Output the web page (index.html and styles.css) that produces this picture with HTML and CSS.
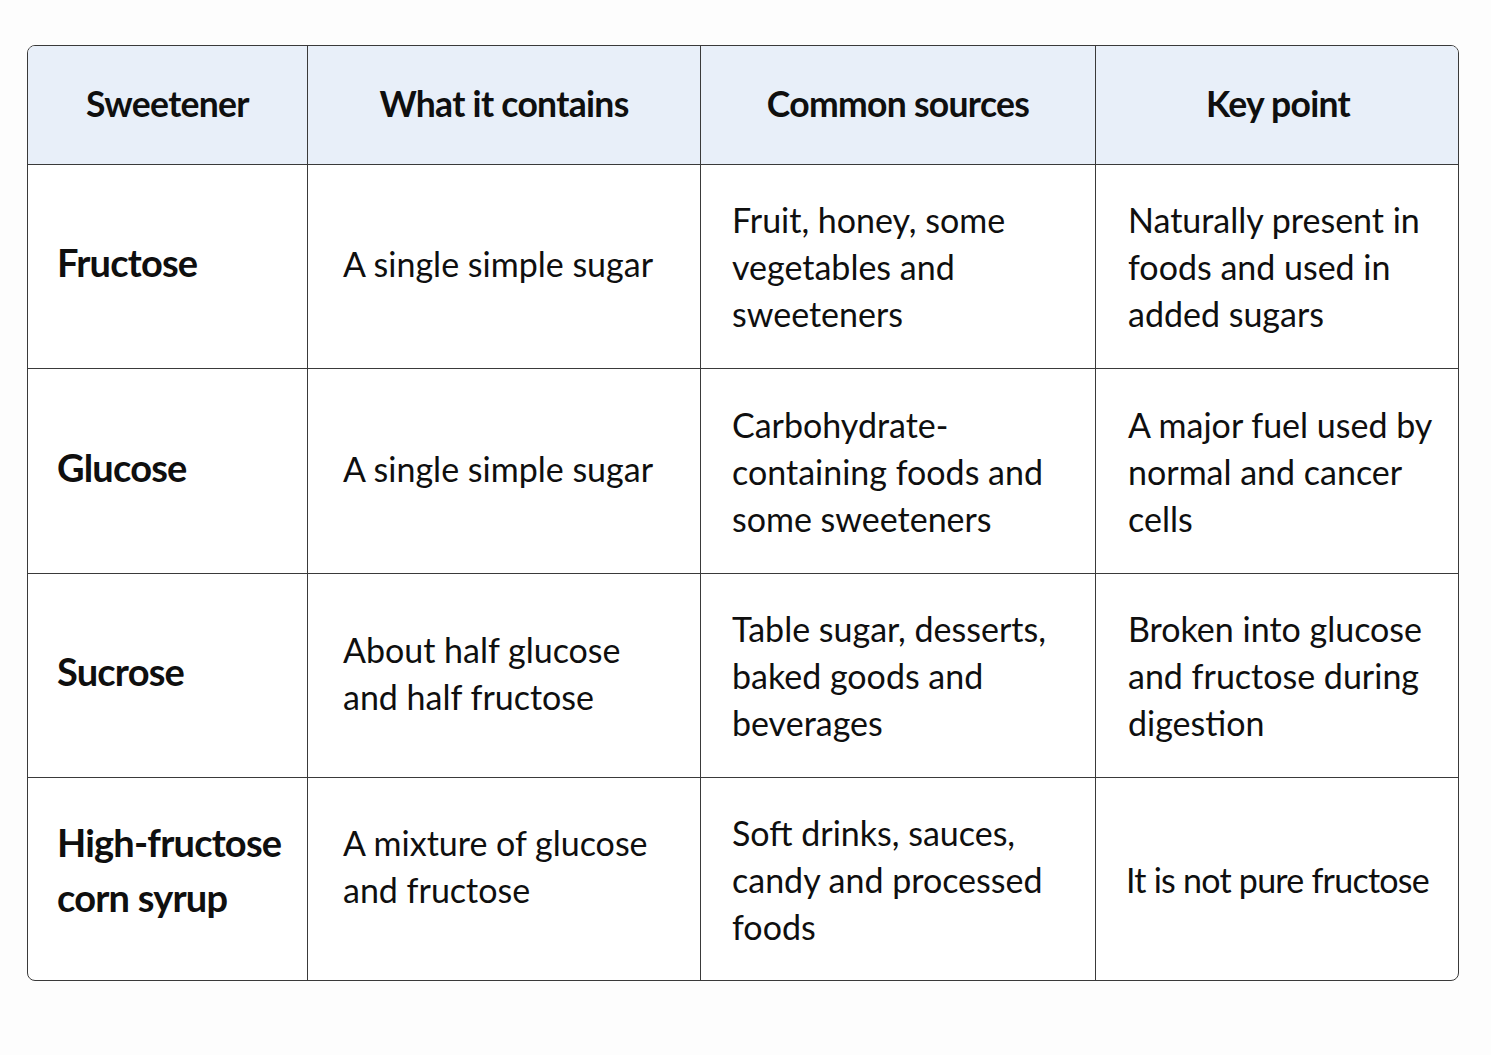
FILE: index.html
```html
<!DOCTYPE html>
<html lang="en">
<head>
<meta charset="utf-8">
<title>Sweeteners</title>
<link rel="stylesheet" href="styles.css">
</head>
<body>
<div class="table">
  <div class="cell head">Sweetener</div>
  <div class="cell head">What it contains</div>
  <div class="cell head">Common sources</div>
  <div class="cell head last">Key point</div>

  <div class="cell name">Fructose</div>
  <div class="cell c2">A single simple sugar</div>
  <div class="cell c3">Fruit, honey, some vegetables and sweeteners</div>
  <div class="cell c4 last">Naturally present in foods and used in added sugars</div>

  <div class="cell name">Glucose</div>
  <div class="cell c2">A single simple sugar</div>
  <div class="cell c3">Carbohydrate-containing foods and some sweeteners</div>
  <div class="cell c4 last">A major fuel used by normal and cancer cells</div>

  <div class="cell name">Sucrose</div>
  <div class="cell c2">About half glucose and half fructose</div>
  <div class="cell c3">Table sugar, desserts, baked goods and beverages</div>
  <div class="cell c4 last">Broken into glucose and fructose during digestion</div>

  <div class="cell name bottom">High-fructose corn syrup</div>
  <div class="cell c2 bottom">A mixture of glucose and fructose</div>
  <div class="cell c3 bottom">Soft drinks, sauces, candy and processed foods</div>
  <div class="cell c4 last bottom tight">It is not pure fructose</div>
</div>
</body>
</html>
```

FILE: styles.css
```css
html, body {
  margin: 0;
  padding: 0;
  background: #fdfdfd;
}

body {
  font-family: Lato, "Open Sans", "Liberation Sans", sans-serif;
  color: #0f0f0f;
}

.table {
  margin: 45px 0 0 27px;
  width: 1432px;
  display: grid;
  grid-template-columns: 280px 393px 395px 364px;
  grid-template-rows: 119px 204px 205px 204px 202px;
  border: 1.5px solid #3a3a3a;
  border-radius: 8px;
  overflow: hidden;
  box-sizing: border-box;
  background: #fff;
}

.cell {
  display: flex;
  align-items: center;
  border-right: 1.5px solid #3a3a3a;
  border-bottom: 1.5px solid #3a3a3a;
  font-size: 34px;
  line-height: 47px;
  box-sizing: border-box;
}

.cell.last { border-right: none; }
.cell.bottom { border-bottom: none; }

.head {
  background: #e8eff9;
  justify-content: center;
  font-weight: 700;
  font-size: 35.5px;
  letter-spacing: -0.7px;
  padding-bottom: 4px;
}

.name {
  font-weight: 700;
  font-size: 38px;
  line-height: 55px;
  letter-spacing: -0.8px;
  padding-left: 29px;
  padding-right: 6px;
  padding-bottom: 8px;
}

.name.bottom { padding-bottom: 18px; }

.c2 { padding-left: 35px; padding-right: 20px; padding-bottom: 6px; }
.c2.bottom { padding-bottom: 26px; }
.c3 { padding-left: 31px; padding-right: 16px; }
.c4 { padding-left: 32px; padding-right: 4px; }
.c4.bottom { padding-left: 30px; }
.tight { letter-spacing: -0.75px; }
```
